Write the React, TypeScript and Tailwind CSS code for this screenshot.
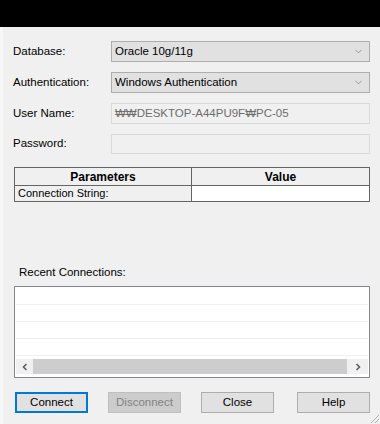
import { ChevronDown } from 'lucide-react';

const FONT = { fontFamily: '"Liberation Sans", Arial, sans-serif' };

function ComboBox({ value }: { value: string }) {
  return (
    <div className="flex h-[21px] flex-1 items-center justify-between border border-[#adadad] bg-[#e1e1e1] pl-[3px] pr-[5px] text-[11.5px] text-black">
      <span>{value}</span>
      <ChevronDown className="h-[11px] w-[11px] text-[#707070]" strokeWidth={1.4} />
    </div>
  );
}

function FieldRow({ label, children, className = '' }: { label: string; children: React.ReactNode; className?: string }) {
  return (
    <div className={`flex items-center ${className}`}>
      <div className="w-[98px] text-[11.5px] text-black">{label}</div>
      {children}
    </div>
  );
}

function Button({ label, focused, disabled }: { label: string; focused?: boolean; disabled?: boolean }) {
  const base = 'flex h-[21px] w-[73px] items-center justify-center text-[11.5px]';
  let cls = 'border border-[#adadad] bg-[#e1e1e1] text-black';
  if (focused) cls = 'border-2 border-[#0078d7] bg-[#e1e1e1] text-black';
  if (disabled) cls = 'border border-[#bfbfbf] bg-[#cccccc] text-[#838383]';
  return <div className={`${base} ${cls}`}>{label}</div>;
}

export default function App() {
  return (
    <div className="relative flex h-[424px] w-[380px] flex-col overflow-hidden bg-[#f0f0f0]" style={FONT}>
      <div className="h-[27px] bg-black" />

      <div className="flex flex-1">
        <div className="w-[3px] bg-[#f7f7f7]" />
        <div className="flex flex-1 flex-col pl-[10px] pr-[10px]">
          <FieldRow label="Database:" className="mt-[14px]">
            <ComboBox value="Oracle 10g/11g" />
          </FieldRow>
          <FieldRow label="Authentication:" className="mt-[10px]">
            <ComboBox value="Windows Authentication" />
          </FieldRow>
          <FieldRow label="User Name:" className="mt-[10px]">
            <div className="flex h-[21px] flex-1 items-center border border-[#d9d9d9] bg-[#f0f0f0] pl-[3px] text-[11.5px] text-[#6d6d6d]">
              ₩₩DESKTOP-A44PU9F₩PC-05
            </div>
          </FieldRow>
          <FieldRow label="Password:" className="mt-[10px]">
            <div className="h-[20px] flex-1 border border-[#d9d9d9] bg-[#f0f0f0]" />
          </FieldRow>

          <div className="ml-[1px] mt-[13px] border border-[#646464] text-[12px] text-black">
            <div className="flex h-[18px] border-b border-[#646464]">
              <div className="flex w-[177px] items-center justify-center border-r border-[#646464] font-bold">Parameters</div>
              <div className="flex flex-1 items-center justify-center font-bold">Value</div>
            </div>
            <div className="flex h-[15px]">
              <div className="flex w-[177px] items-center border-r border-[#646464] pl-[3px] text-[11px]">Connection String:</div>
              <div className="flex-1 bg-white" />
            </div>
          </div>

          <div className="ml-[6px] mt-[63px] text-[11.5px] leading-[15px] text-black">Recent Connections:</div>

          <div className="ml-[1px] mt-[6px] flex h-[92px] flex-col border border-[#828790] bg-white p-[1px]">
            <div className="flex flex-1 flex-col">
              {[0, 1, 2, 3].map((i) => (
                <div key={i} className="h-[17px] border-b border-[#f0f0f0]" />
              ))}
            </div>
            <div className="mb-[2px] flex h-[15px]">
              <div className="flex w-[17px] items-center justify-center bg-[#f0f0f0]">
                <svg width="8" height="8" viewBox="0 0 8 8">
                  <path d="M5.5 1 L2.5 4 L5.5 7" stroke="#606060" strokeWidth="1.6" fill="none" />
                </svg>
              </div>
              <div className="flex-1 bg-[#cdcdcd]" />
              <div className="flex w-[21px] items-center justify-center bg-[#f0f0f0]">
                <svg width="8" height="8" viewBox="0 0 8 8">
                  <path d="M2.5 1 L5.5 4 L2.5 7" stroke="#606060" strokeWidth="1.6" fill="none" />
                </svg>
              </div>
            </div>
          </div>

          <div className="ml-[2px] mt-[14px] flex items-center">
            <Button label="Connect" focused />
            <div className="w-[20px]" />
            <Button label="Disconnect" disabled />
            <div className="w-[20px]" />
            <Button label="Close" />
            <div className="w-[23px]" />
            <Button label="Help" />
          </div>
        </div>
      </div>

      <svg className="absolute bottom-0 right-0" width="12" height="12" viewBox="0 0 12 12">
        <path d="M11 3 L3 11 M11 7 L7 11" stroke="#b0b0b0" strokeWidth="1" />
      </svg>
    </div>
  );
}
